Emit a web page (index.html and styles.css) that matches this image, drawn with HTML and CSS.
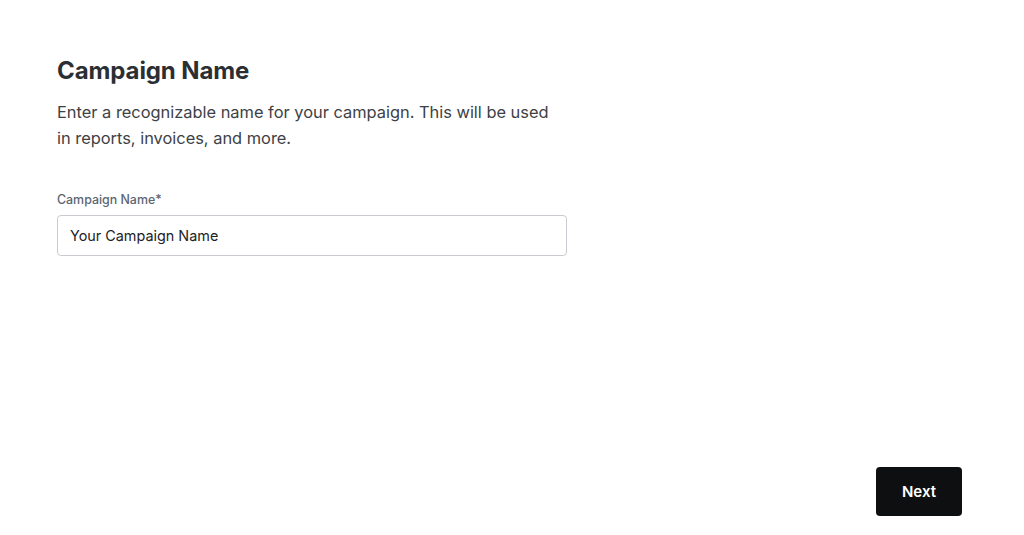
FILE: index.html
```html
<!DOCTYPE html>
<html lang="en">
<head>
<meta charset="utf-8">
<title>Campaign Name</title>
<link rel="stylesheet" href="styles.css">
</head>
<body>
<div class="page">
  <main class="content">
    <h1 class="title">Campaign Name</h1>
    <p class="desc">Enter a recognizable name for your campaign. This will be used in reports, invoices, and more.</p>
    <label class="field">
      <span class="label">Campaign Name*</span>
      <input class="input" type="text" value="Your Campaign Name">
    </label>
  </main>
  <footer class="footer">
    <button class="next" type="button">Next</button>
  </footer>
</div>
</body>
</html>
```
FILE: styles.css
```css
* { box-sizing: border-box; }
html, body { margin: 0; padding: 0; background: #fff; }
body {
  font-family: Inter, "Noto Sans", sans-serif;
  color: #2b2f33;
}
.page {
  height: 535px;
  display: flex;
  flex-direction: column;
  justify-content: space-between;
  padding: 56px 62px 19px 57px;
}
.content { width: 510px; }
.title {
  margin: 0;
  font-size: 24px;
  line-height: 30px;
  font-weight: 700;
  color: #2b2f33;
  letter-spacing: -0.1px;
}
.desc {
  margin: 13px 0 0;
  font-size: 16.4px;
  line-height: 26px;
  color: #3d4145;
  width: 496px;
}
.field { display: flex; flex-direction: column; margin-top: 41px; }
.label {
  font-size: 12.4px;
  line-height: 16px;
  font-weight: 500;
  color: #5c6670;
}
.input {
  margin-top: 7px;
  width: 510px;
  height: 41px;
  border: 1px solid #c8ccd0;
  border-radius: 4px;
  padding: 0 12px;
  font-family: inherit;
  font-size: 14.4px;
  color: #1e2226;
  outline: none;
}
.footer { display: flex; justify-content: flex-end; }
.next {
  width: 86px;
  height: 49px;
  background: #0e0f11;
  color: #fff;
  border: none;
  border-radius: 4px;
  font-family: inherit;
  font-size: 15px;
  font-weight: 600;
}
```
